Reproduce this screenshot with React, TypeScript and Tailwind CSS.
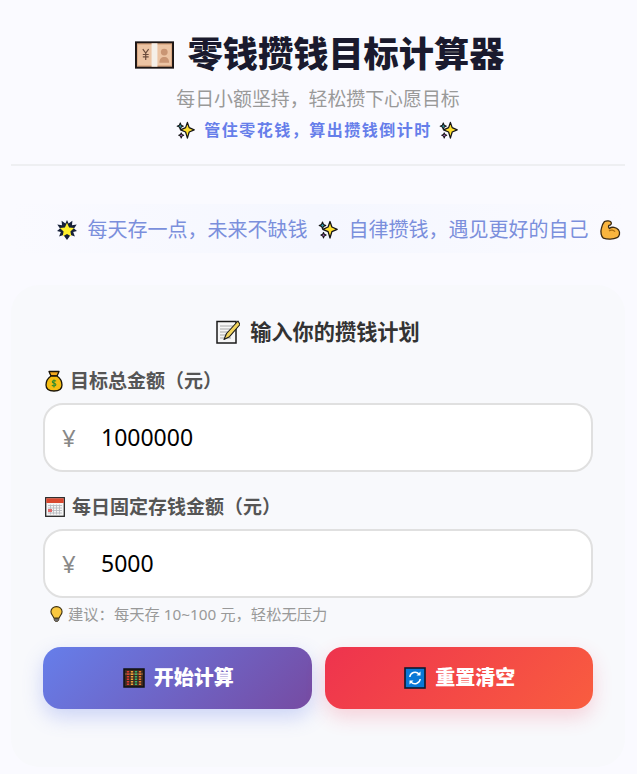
const Note = ({ className }: { className: string }) => (
  <svg viewBox="0 0 40 28" className={className}>
    <rect x="1" y="1" width="38" height="26" fill="#d9a782" stroke="#1b1414" strokeWidth="2" />
    <rect x="3" y="3.500" width="34" height="21" fill="#ecc4a4" />
    <rect x="17" y="2" width="6" height="24" fill="#f5efe8" />
    <path d="M8 8l3 4 3-4M11 12v7M8 13.500h6M8 16h6" fill="none" stroke="#6a4c3c" strokeWidth="1.200" />
    <circle cx="30" cy="11" r="3.500" fill="#c99574" />
    <path d="M25 22c0-4 2-6 5-6s5 2 5 6z" fill="#c99574" />
  </svg>
);

const Sparkles = ({ className }: { className: string }) => (
  <svg viewBox="0 0 20 20" className={className}>
    <path d="M12 1.500l1.900 5.500 5.300 2.300-5.300 2.300-1.900 6.400-1.900-6.400-5.300-2.300 5.300-2.300z" fill="#ffdf2e" stroke="#161616" strokeWidth="1.300" strokeLinejoin="round" />
    <path d="M4.500 2l1 2.400 2.300 1-2.300 1-1 2.400-1-2.400-2.300-1 2.300-1z" fill="#2f97a8" stroke="#161616" strokeWidth="1.100" strokeLinejoin="round" />
    <path d="M5.500 12.500l.8 1.800 1.800.8-1.800.8-.8 2-.8-2-1.800-.8 1.800-.8z" fill="#b565c9" stroke="#161616" strokeWidth="1.100" strokeLinejoin="round" />
  </svg>
);

const GlowStar = ({ className }: { className: string }) => (
  <svg viewBox="0 0 20 20" className={className}>
    <path d="M10 0l1.600 3.600L15.400.8l-.4 4.400 4.700-.6-2.700 3.800L20 11l-3.800 1 1.700 4.600-4.300-1.600L10 20l-3.600-5-4.300 1.600L3.800 12 0 11l3-2.600L.3 4.600l4.700.6L4.600.8l3.800 2.800z" fill="#17213a" />
    <path d="M10 2.800l2.100 4.600 5 .6-3.700 3.400 1 5-4.400-2.500-4.400 2.500 1-5L2.900 8l5-.6z" fill="#fff02e" />
  </svg>
);

const Muscle = ({ className }: { className: string }) => (
  <svg viewBox="0 0 22 20" className={className}>
    <path d="M5.500 1.500c2-1 5.500-1 6.500.6 1 1.600-.3 3.300-2.200 3.300-.6 1.100-.3 2.300.5 3.100 2.600-2.200 7-1.400 9.300 1.500 1.800 2.600 1 6.200-1.600 7.700-3.600 1.800-9.800 1.900-13.600.4C2.300 16.600 1.200 12 2.400 8.400 3 5.900 4 3 5.500 1.500z" fill="#f9b53e" stroke="#3a2a12" strokeWidth="1.300" strokeLinejoin="round" />
    <path d="M10 11c2-1.500 5-1 6 .8" fill="none" stroke="#a86c10" strokeWidth="1.100" />
  </svg>
);

const Memo = ({ className }: { className: string }) => (
  <svg viewBox="0 0 24 24" className={className}>
    <rect x="1" y="1.500" width="19" height="21.500" fill="#f6f6f6" stroke="#1a1a1a" strokeWidth="1.500" />
    <path d="M4 6h13M4 9h10M4 12h8M4 15h6M4 18h11" stroke="#a8a8a8" strokeWidth="1" />
    <path d="M22 1l-11.500 12.500-2.500 6 5.500-2.800L24 4.500z" fill="#f2d45c" stroke="#1a1a1a" strokeWidth="1.100" strokeLinejoin="round" />
  </svg>
);

const MoneyBag = ({ className }: { className: string }) => (
  <svg viewBox="0 0 18 22" className={className}>
    <path d="M4 1.500h10l-2 4.500H6z" fill="#f4a91c" stroke="#1a1408" strokeWidth="1.300" strokeLinejoin="round" />
    <path d="M6 6h6c3 2 5 5.500 5 9 0 4-3 6-8 6s-8-2-8-6c0-3.500 2-7 5-9z" fill="#f5bd12" stroke="#1a1408" strokeWidth="1.300" strokeLinejoin="round" />
    <path d="M11 11.200c-.6-1-3.500-1.200-3.700.5-.1 2 3.700 1 3.600 3-.1 1.700-3.200 1.500-4 .4M9 9.500v8" fill="none" stroke="#2e8b2e" strokeWidth="1.100" />
  </svg>
);

const CalendarIcon = ({ className }: { className: string }) => (
  <svg viewBox="0 0 20 20" className={className}>
    <rect x=".7" y=".7" width="18.600" height="18.600" fill="#f5f5f5" stroke="#262626" strokeWidth="1.300" />
    <rect x="1.300" y="1.300" width="17.400" height="4.700" fill="#d9482f" />
    <path d="M3 8.500h14M3 11h14M3 13.500h14M3 16h14M5.500 7.500v10M8.500 7.500v10M11.500 7.500v10M14.500 7.500v10" stroke="#b9bcc2" strokeWidth=".9" />
    <rect x="3" y="12" width="4" height="3" fill="#e56a6a" />
  </svg>
);

const Bulb = ({ className }: { className: string }) => (
  <svg viewBox="0 0 14 18" className={className}>
    <path d="M7 1C3.500 1 1 3.500 1 6.500c0 2.800 2.500 4.500 3.200 7h5.600C10.500 11 13 9.300 13 6.500 13 3.500 10.500 1 7 1z" fill="#f9c83f" stroke="#3d3114" strokeWidth="1.200" strokeLinejoin="round" />
    <path d="M4.500 14h5v1.500l-1.300 1.500H5.800l-1.300-1.500z" fill="#6f7176" stroke="#3d3114" strokeWidth=".8" />
  </svg>
);

const Abacus = ({ className }: { className: string }) => (
  <svg viewBox="0 0 22 20" className={className}>
    <rect x="1" y="1" width="20" height="18" fill="#3b2a20" stroke="#111" strokeWidth="1.500" />
    <path d="M2 6h18" stroke="#a06d3a" strokeWidth="1" />
    <path d="M5 3v15" stroke="#e03c31" strokeWidth="2.400" strokeDasharray="1.600 .9" />
    <path d="M9 3v15" stroke="#f2a33a" strokeWidth="2.400" strokeDasharray="1.600 .9" />
    <path d="M13 3v15" stroke="#39b36a" strokeWidth="2.400" strokeDasharray="1.600 .9" />
    <path d="M17 3v15" stroke="#e8772e" strokeWidth="2.400" strokeDasharray="1.600 .9" />
  </svg>
);

const Refresh = ({ className }: { className: string }) => (
  <svg viewBox="0 0 22 22" className={className}>
    <rect x="1" y="1" width="20" height="20" fill="#0a78d6" stroke="#101a2e" strokeWidth="1.600" />
    <path d="M5.800 10a5.300 5.300 0 0 1 9.200-3M16.200 12a5.300 5.300 0 0 1-9.200 3" fill="none" stroke="#fff" strokeWidth="1.500" />
    <path d="M16.500 4.500v4h-4zM5.500 17.500v-4h4z" fill="#fff" />
  </svg>
);

function AmountField({ value }: { value: string }) {
  return (
    <div className="flex h-[69px] items-center rounded-[20px] border-2 border-[#e0e0e0] bg-white pl-[17px]">
      <span className="w-[39px] text-[24px] leading-none text-[#888]">¥</span>
      <input
        readOnly
        value={value}
        className="min-w-0 flex-1 bg-transparent text-[23px] text-black outline-none"
      />
    </div>
  );
}

export default function App() {
  return (
    <div className="min-h-[774px] overflow-hidden bg-[#fafaff] pr-[12px] pl-[11px] font-['Noto_Sans','Noto_Sans_CJK_SC',sans-serif]">
      <header className="flex h-[166px] flex-col items-center border-b-2 border-[#eeeff2] pt-[28px]">
        <h1 className="ml-[3px] flex h-[50px] items-center gap-[14px] text-[35.200px] font-black text-[#1a1a2e]">
          <Note className="mt-[4px] h-[28px] w-[39px]" />
          零钱攒钱目标计算器
        </h1>
        <p className="mt-[6px] text-[18.900px] leading-[30px] text-[#999]">每日小额坚持，轻松攒下心愿目标</p>
        <p className="mt-[3px] -ml-[2px] flex items-center gap-[9px] text-[16px] leading-[26px] font-bold tracking-[1.500px] text-[#667eea]">
          <Sparkles className="h-[19px] w-[19px]" />
          管住零花钱，算出攒钱倒计时
          <Sparkles className="-ml-[2px] h-[19px] w-[19px]" />
        </p>
      </header>

      <div className="mt-[38px] flex h-[49px] items-center gap-[10.500px] whitespace-nowrap bg-gradient-to-r from-transparent via-[#f5f7ff] to-transparent pt-[3px] pl-[46px] text-[20px] text-[#7b8fdc]">
        <GlowStar className="h-[20px] w-[20px]" />
        <span>每天存一点，未来不缺钱</span>
        <Sparkles className="h-[20px] w-[20px]" />
        <span>自律攒钱，遇见更好的自己</span>
        <Muscle className="h-[20px] w-[22px]" />
      </div>

      <section className="mt-[32px] h-[482px] rounded-[28px] bg-[#f8f9fc] px-[32px] pt-[32px]">
        <h2 className="flex h-[30px] items-center justify-center gap-[10px] text-[21.200px] font-bold text-[#333]">
          <Memo className="h-[24px] w-[24px]" />
          输入你的攒钱计划
        </h2>
        <label className="mt-[19px] flex h-[30px] items-center gap-[7px] text-[19px] font-bold text-[#555]">
          <MoneyBag className="ml-[2px] h-[22px] w-[18px]" />
          目标总金额（元）
        </label>
        <div className="mt-[7px]">
          <AmountField value="1000000" />
        </div>
        <label className="mt-[20px] flex h-[30px] items-center gap-[7px] text-[19px] font-bold text-[#555]">
          <CalendarIcon className="ml-[2px] h-[20px] w-[20px]" />
          每日固定存钱金额（元）
        </label>
        <div className="mt-[7px]">
          <AmountField value="5000" />
        </div>
        <p className="mt-[6px] flex h-[20px] items-center gap-[5px] text-[15.300px] text-[#999]">
          <Bulb className="ml-[7px] h-[18px] w-[13px]" />
          建议：每天存 10~100 元，轻松无压力
        </p>
        <div className="mt-[23px] grid grid-cols-2 gap-[13px]">
          <button className="flex h-[62px] items-center justify-center gap-[9px] rounded-[18px] bg-[linear-gradient(135deg,#667eea,#764ba2)] pl-[2px] text-[20px] font-black text-white shadow-[0_8px_20px_rgba(102,126,234,0.3)]">
            <Abacus className="h-[20px] w-[22px]" />
            开始计算
          </button>
          <button className="flex h-[62px] items-center justify-center gap-[9px] rounded-[18px] bg-[linear-gradient(135deg,#ee334e,#f95d3f)] pl-[2px] text-[20px] font-black text-white shadow-[0_8px_20px_rgba(238,51,78,0.2)]">
            <Refresh className="h-[22px] w-[22px]" />
            重置清空
          </button>
        </div>
      </section>
    </div>
  );
}
